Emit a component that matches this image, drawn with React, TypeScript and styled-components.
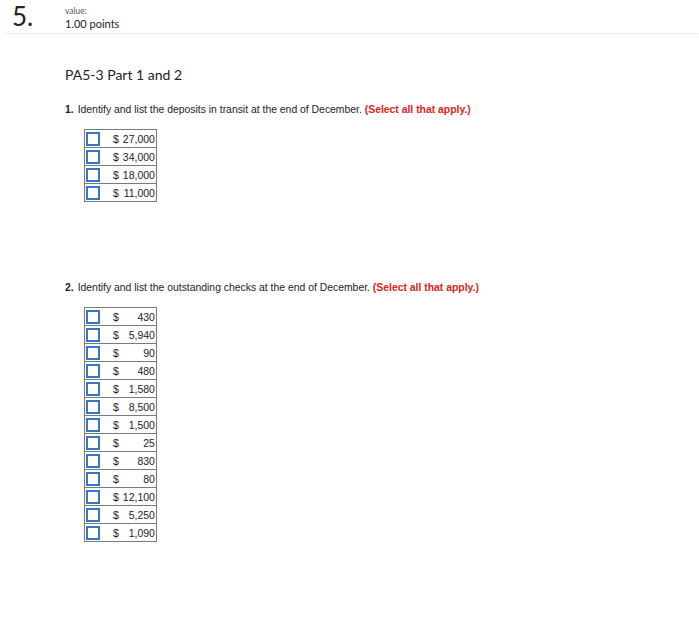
import React from "react";
import styled, { createGlobalStyle } from "styled-components";

const Global = createGlobalStyle`
  html, body { margin: 0; padding: 0; background: #fff; }
  body { font-family: "Liberation Sans", Arial, sans-serif; color: #333; }
`;

const Page = styled.div`
  width: 699px;
  min-height: 626px;
  box-sizing: border-box;
`;

const Header = styled.div`
  display: flex;
  align-items: flex-start;
  margin: 0 1px 0 5px;
  padding: 1px 0 2px;
  border-bottom: 1px solid #e6e6e6;
`;

const Number = styled.div`
  font-family: "Lato", "Liberation Sans", sans-serif;
  font-size: 26px;
  line-height: 28px;
  padding-top: 1px;
  color: #222;
  width: 60px;
  padding-left: 7px;
  box-sizing: border-box;
`;

const ValueBox = styled.div`
  display: flex;
  flex-direction: column;
  padding-top: 4px;
  font-family: "Lato", "Liberation Sans", sans-serif;
`;

const ValueLabel = styled.div`
  font-size: 8.5px;
  line-height: 12px;
  color: #555;
`;

const Points = styled.div`
  font-size: 11px;
  line-height: 14px;
  color: #222;
`;

const Body = styled.div`
  padding: 32px 0 0 65px;
`;

const Title = styled.div`
  font-family: "Lato", "Liberation Sans", sans-serif;
  font-size: 14px;
  line-height: 18px;
  color: #222;
`;

const Question = styled.div<{ $top: number }>`
  margin-top: ${(p) => p.$top}px;
  font-size: 10.4px;
  line-height: 12px;
  color: #222;
`;

const QNum = styled.span`
  font-weight: bold;
  margin-right: 4px;
`;

const Hint = styled.span`
  color: #e2231a;
  font-weight: bold;
`;

const Table = styled.table`
  margin: 13px 0 0 19px;
  border-collapse: collapse;
  border: 1px solid #7a7a7a;
  font-size: 10.5px;
  color: #222;
`;

const Row = styled.tr`
  border-top: 1px solid #7a7a7a;
`;

const BoxCell = styled.td`
  padding: 0 0 0 1px;
  width: 20px;
  height: 17px;
  vertical-align: middle;
`;

const Check = styled.span`
  display: block;
  width: 10px;
  height: 10px;
  border: 2px solid #3b75bd;
  background: #fff;
`;

const Dollar = styled.td`
  padding: 0 0 0 7px;
  vertical-align: middle;
`;

const Amount = styled.td`
  padding: 0 1px 0 4px;
  text-align: right;
  vertical-align: middle;
`;

const deposits = ["27,000", "34,000", "18,000", "11,000"];
const checks = [
  "430",
  "5,940",
  "90",
  "480",
  "1,580",
  "8,500",
  "1,500",
  "25",
  "830",
  "80",
  "12,100",
  "5,250",
  "1,090",
];

function Choices({ items }: { items: string[] }) {
  return (
    <Table>
      <tbody>
        {items.map((v, i) => (
          <Row key={i}>
            <BoxCell>
              <Check />
            </BoxCell>
            <Dollar>$</Dollar>
            <Amount>{v}</Amount>
          </Row>
        ))}
      </tbody>
    </Table>
  );
}

export default function App() {
  return (
    <Page>
      <Global />
      <Header>
        <Number>5.</Number>
        <ValueBox>
          <ValueLabel>value:</ValueLabel>
          <Points>1.00 points</Points>
        </ValueBox>
      </Header>
      <Body>
        <Title>PA5-3 Part 1 and 2</Title>
        <Question $top={20}>
          <QNum>1.</QNum>Identify and list the deposits in transit at the end of
          December. <Hint>(Select all that apply.)</Hint>
        </Question>
        <Choices items={deposits} />
        <Question $top={80}>
          <QNum>2.</QNum>Identify and list the outstanding checks at the end of
          December. <Hint>(Select all that apply.)</Hint>
        </Question>
        <Choices items={checks} />
      </Body>
    </Page>
  );
}
